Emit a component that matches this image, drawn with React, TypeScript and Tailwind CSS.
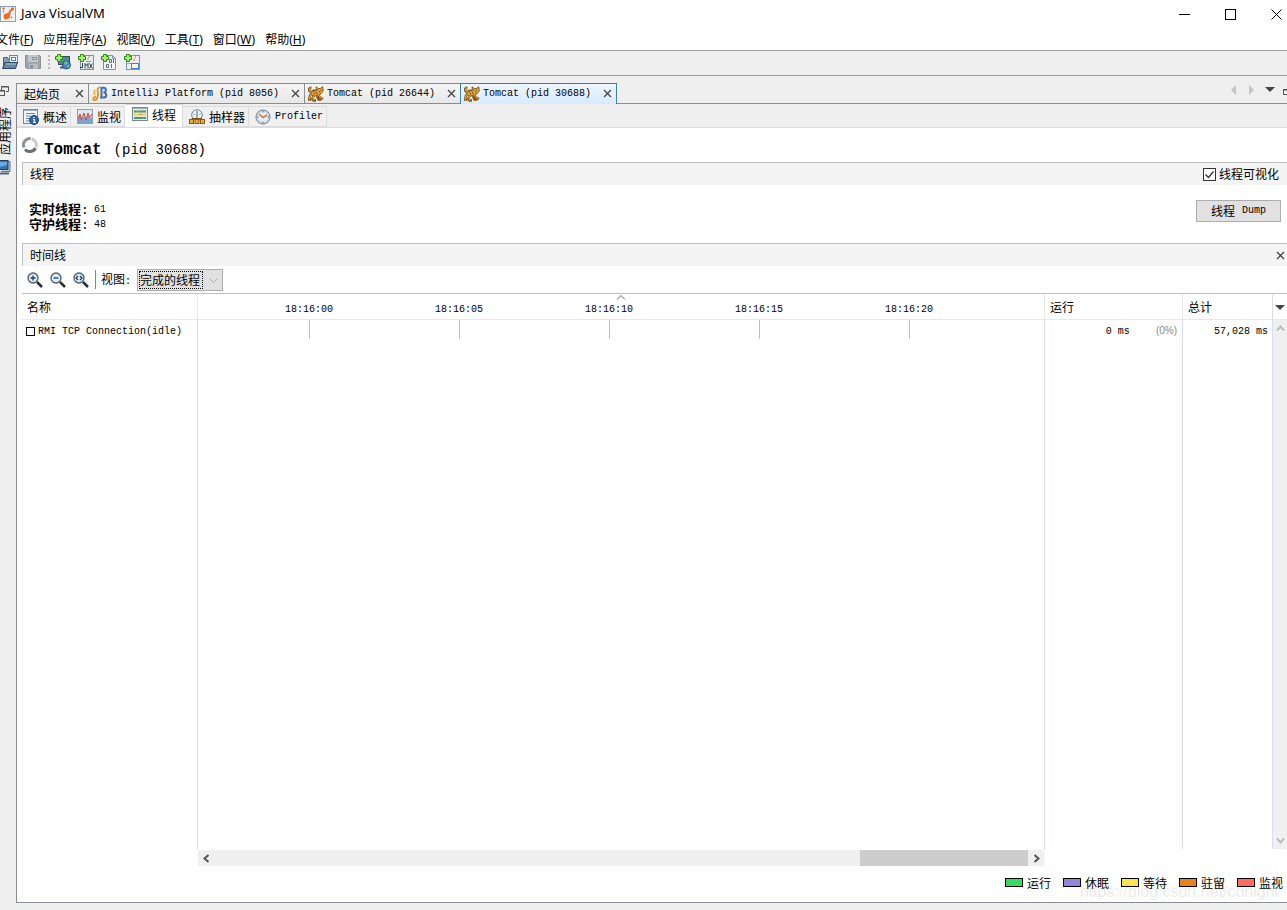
import { useState, type ReactNode } from "react";
import clsx from "clsx";

const MENUS = [
  { label: "文件", hotkey: "F" },
  { label: "应用程序", hotkey: "A" },
  { label: "视图", hotkey: "V" },
  { label: "工具", hotkey: "T" },
  { label: "窗口", hotkey: "W" },
  { label: "帮助", hotkey: "H" },
];

const TICKS = ["18:16:00", "18:16:05", "18:16:10", "18:16:15", "18:16:20"];

const LEGEND = [
  { label: "运行", color: "bg-[#36db62]" },
  { label: "休眠", color: "bg-[#9585db]" },
  { label: "等待", color: "bg-[#ffe253]" },
  { label: "驻留", color: "bg-[#e8821c]" },
  { label: "监视", color: "bg-[#ff6d62]" },
];

const MONO = "font-['Liberation_Mono','Noto_Sans_CJK_SC',monospace]";

interface IconProps {
  children: ReactNode;
  size?: number;
}

function Icon({ children, size = 16 }: IconProps) {
  return (
    <svg
      width={size}
      height={size}
      viewBox={`0 0 ${size} ${size}`}
      fill="none"
      className="shrink-0"
      aria-hidden
    >
      {children}
    </svg>
  );
}

function AppIcon() {
  return (
    <Icon>
      <rect x="0.5" y="0.5" width="15" height="15" fill="#f1f6fa" stroke="#8ba1b4" />
      <path d="M9 1v14M1 8h14" stroke="#d5e0e9" />
      <path
        d="M3.500 10.500C3.500 8.500 5 7 7 7.500l2-1.500L9 4.500 13 2l.5 1L10.500 6l.5 1.500-1 .5.5 1.500C9.800 12.500 7 14 5.500 13.500 4.200 13.200 3.500 12 3.500 10.500Z"
        fill="#f4691e"
      />
      <circle cx="3.500" cy="2.500" r="1.200" fill="#f4691e" />
      <circle cx="12.500" cy="3" r="1.700" fill="#f4691e" />
      <circle cx="3.500" cy="5.500" r=".9" fill="#f4691e" />
      <circle cx="11.500" cy="11.500" r=".9" fill="#f4691e" />
    </Icon>
  );
}

function OpenIcon() {
  return (
    <Icon>
      <path d="M1.500 13V3.500h4l1 2H13V8" fill="#8aa0b6" stroke="#46617d" />
      <rect x="7.500" y="1.500" width="8" height="7" fill="#eaf3fb" stroke="#5f87b0" />
      <rect x="9.500" y="3.500" width="4" height="3" fill="#fff" stroke="#4e83bd" />
      <path d="M.5 14.500 3 8.500h12.500l-2 6Z" fill="#6786a5" stroke="#2d4763" />
      <path d="M4 10h10" stroke="#a9bfd4" />
    </Icon>
  );
}

function SaveIcon() {
  return (
    <Icon>
      <path d="M.5 1.500h14l1 1v12h-14l-1-1Z" fill="#a0a5aa" stroke="#8c9196" />
      <rect x="3" y="1" width="10" height="7" fill="#c3c7cb" />
      <rect x="7.500" y="3.500" width="4" height="2" stroke="#91979d" />
      <rect x="4" y="10" width="9" height="5" fill="#b9bdc1" />
      <rect x="5" y="11" width="3" height="4" fill="#8e9398" />
    </Icon>
  );
}

function PlusMark() {
  return (
    <path
      d="M2.500.5h3v2h2v3h-2v2h-3v-2h-2v-3h2Z"
      fill="#a6ee69"
      stroke="#2c8911"
    />
  );
}

function AddRemoteIcon() {
  return (
    <Icon>
      <rect x="3.500" y="2.500" width="11" height="8" fill="#5684a7" stroke="#354a5e" />
      <path d="M5 13.500h6M8 11v3" stroke="#4c5c6b" strokeWidth="2" />
      <circle cx="11.500" cy="11" r="4" fill="#3d88c8" stroke="#285a83" />
      <path d="M9 9c1-2 3-2 4-1l-1 2-2 1Zm3 3 3-2-1 3-2 1Z" fill="#7fc45a" />
      <PlusMark />
    </Icon>
  );
}

function AddJmxIcon() {
  return (
    <Icon>
      <rect x="2.500" y="1.500" width="13" height="14" fill="#e9eff5" stroke="#8092a5" />
      <path d="M11 2c1 2-2 2-1 4" stroke="#e98131" />
      <path d="M8 7c1 1 4 1 5 0" stroke="#5382b1" />
      <path
        d="M4.500 9v4.500H2M7 14.500V9.500l1.500 2 1.500-2v5M11.500 9.500l3 5M14.500 9.500l-3 5"
        stroke="#333c45"
      />
      <PlusMark />
    </Icon>
  );
}

function AddDumpIcon() {
  return (
    <Icon>
      <path d="M2.500 1.500h9l3 3v11h-12Z" fill="#f3f6f9" stroke="#8092a5" />
      <path d="M11.500 1.500v3h3" stroke="#8092a5" />
      <path d="M8.500 5.500h2v3h-2ZM12.500 5v4M5.500 10.500h2v3h-2ZM10.500 10v4" stroke="#606c77" />
      <PlusMark />
    </Icon>
  );
}

function AddSnapshotIcon() {
  return (
    <Icon>
      <rect x="2.500" y="1.500" width="13" height="14" fill="#eaf0f6" stroke="#7f91a4" />
      <path d="M11 2c2 2-2 2-1 5" stroke="#e98131" />
      <path d="M2.500 9.500h13" stroke="#8eabc7" />
      <rect x="7.500" y="9.500" width="7" height="5" fill="#fff" stroke="#4b82bd" />
      <PlusMark />
    </Icon>
  );
}

function IntelliJIcon() {
  return (
    <Icon>
      <path d="M8 1C3 3 7 6 6 9.500c-.5 2.500-1.500 4.500-3.500 4.500C.5 14 1 10.500 4 11" stroke="#e99212" strokeWidth="1.800" />
      <path d="M3.500 4C1.500 6 1.500 7.500 3.500 8.500" stroke="#f6b73d" strokeWidth="1.800" />
      <path d="M9.500 12V1.800h2c3.200 0 3.200 4.200 0 4.700 3.800.3 3.600 5 0 5H8" stroke="#4370b8" strokeWidth="2" />
    </Icon>
  );
}

function TomcatIcon() {
  return (
    <Icon>
      <path
        d="M3.500 6C0 5.500.5 1.500 3.500 1.800M4 5.500c2-2 3.500 0 5-1M4 7l-2 2.500-1 4h2.500M6 9.500 4.500 12l1 2.500H8M10 8.500l1.500 2.500 3.500 2M9 10l1.500 3.500h3"
        stroke="#8a5810"
        strokeWidth="2.400"
      />
      <path
        d="M3 6.500c2-2.500 4-1 5.500-2L8 .8l2.300 1.700h2L14.800.8l.4 4.200-2.200 2.800L11 9 7 10 4 9.500Z"
        fill="#e3a744"
        stroke="#80510f"
        strokeWidth=".9"
      />
      <path
        d="M3.500 6C.5 5.500 1 1.700 3.500 1.800M3.500 7.500 2 10l-.7 3.500M6 9.500 4.800 12l1 2.300M10.500 9l1.500 2 2.500 1.800"
        stroke="#e8b352"
      />
      <path d="M5.500 6.500 7 8.500M8 6l1.500 2M9.500 4.200h1M12.300 4.200h1M11 6h1.300" stroke="#664008" />
    </Icon>
  );
}

function OverviewIcon() {
  return (
    <Icon>
      <rect x="0.5" y="0.5" width="14" height="14" fill="#eef3f8" stroke="#74899e" />
      <path d="M1 1.500h13" stroke="#9db2c6" />
      <path d="M3 4.500h9M3 7h5M3 9.500h4M3 12h3" stroke="#6e879e" />
      <circle cx="11" cy="11" r="4.500" fill="#2f65ae" stroke="#1d4585" />
      <path d="M11 8v1.300M10 10.500h1.300v3M10 13.500h3" stroke="#fff" strokeWidth="1.200" />
    </Icon>
  );
}

function MonitorIcon() {
  return (
    <Icon>
      <rect x="0.5" y="0.5" width="15" height="14" fill="#dce9f3" stroke="#89a0b4" />
      <path d="M1 14V9l2-3 2 5 2-4 2 4 2-5 2 4 2-2v6Z" fill="#78a6d1" />
      <path d="m1 10 2-5 1.500 6L7 4l2 7 2-7 1.500 5L15 5" stroke="#d3413d" />
    </Icon>
  );
}

function ThreadsIcon() {
  return (
    <Icon>
      <rect x="0.5" y="0.5" width="15" height="13" fill="#dfe8f0" stroke="#72889e" />
      <path d="M1 1.500h14" stroke="#a0b6ca" />
      <path d="M2 4.500h12" stroke="#649546" strokeWidth="2" />
      <path d="M2 7.500h12" stroke="#ecd661" strokeWidth="2" />
      <path d="M2 11h12" stroke="#569756" strokeWidth="2" />
      <path d="M5 4.500h2M10 11h2M7 7.500h3" stroke="#e18a48" />
    </Icon>
  );
}

function SamplerIcon() {
  return (
    <Icon>
      <circle cx="8" cy="6" r="5.300" fill="#edf5fc" stroke="#6d8297" />
      <path d="M8 2v4M4.500 5l1 .5M11.500 5l-1 .5" stroke="#4d6880" />
      <path d="M8 6v6M3 12V9.500h10V12" stroke="#765018" />
      <rect x="0.5" y="10.500" width="4" height="4" fill="#e6ad41" stroke="#88591a" />
      <rect x="6" y="10.500" width="4" height="4" fill="#e6ad41" stroke="#88591a" />
      <rect x="11.500" y="10.500" width="4" height="4" fill="#e6ad41" stroke="#88591a" />
    </Icon>
  );
}

function ProfilerIcon() {
  return (
    <Icon>
      <circle cx="8" cy="8" r="7" fill="#e2eef7" stroke="#637c91" />
      <circle cx="8" cy="8" r="5.500" stroke="#bdd0df" />
      <path d="m4 5 4 3.500L12 6" stroke="#e4752b" strokeWidth="1.500" />
      <path d="M8 2v1.500M8 12.500V14M2 8h1.500M12.500 8H14" stroke="#627d95" />
    </Icon>
  );
}

function SpinnerIcon() {
  return (
    <Icon>
      <path d="M2 10.500A6.500 6.500 0 0 1 8.500 1.500" stroke="#8f8f95" strokeWidth="3" />
      <path d="M9.500 1.700A6.500 6.500 0 0 1 14 10" stroke="#c9c9cd" strokeWidth="3" />
      <path d="M13.500 11A6.500 6.500 0 0 1 3 12.500" stroke="#6c6c74" strokeWidth="3" />
    </Icon>
  );
}

function ZoomIcon({ sign }: { sign: string }) {
  return (
    <Icon>
      <path d="m10 10 5 5" stroke="#2e2e2e" strokeWidth="2.500" />
      <circle cx="6" cy="6" r="5" fill="#d9ebfa" stroke="#545b63" strokeWidth="1.300" />
      <path d={sign} stroke="#1f4268" strokeWidth="1.300" />
    </Icon>
  );
}

function CloseGlyph() {
  return (
    <Icon size={9}>
      <path d="m1 1 7 7M8 1 1 8" stroke="#444" strokeWidth="1.300" />
    </Icon>
  );
}

function RestoreIcon() {
  return (
    <Icon size={12}>
      <path d="M4.500 5V1.500h7v5H9" stroke="#555" />
      <path d="M4 2h8" stroke="#555" />
      <rect x="0.500" y="5.500" width="7" height="5" stroke="#555" />
      <path d="M0 6h8" stroke="#555" />
    </Icon>
  );
}

function ApplicationsIcon() {
  return (
    <Icon>
      <path d="M6 2.500h9v10H6" fill="#c6d3df" stroke="#607182" />
      <rect x="1" y="1.500" width="12" height="9" fill="#3473b5" stroke="#1d3f63" />
      <path d="M2 3h10v3L2 9Z" fill="#6fa9df" />
      <path d="M4 14.500h10" stroke="#52606e" strokeWidth="2" />
    </Icon>
  );
}

interface EditorTabProps {
  icon?: ReactNode;
  active?: boolean;
  children: ReactNode;
}

function EditorTab({ icon, active, children }: EditorTabProps) {
  return (
    <div
      className={clsx(
        "flex h-full items-center border-t border-r pr-1",
        active
          ? "-ml-px border-l border-[#3c7fb1] bg-linear-to-b from-[#edf6ff] to-[#d9eafc] pb-px"
          : "border-b border-[#898c95] bg-linear-to-b from-[#f5f5f5] to-[#e8e8e8]",
        icon ? "pl-[3px]" : "pl-[7px]",
      )}
    >
      <button type="button" className="flex items-center gap-[3px] whitespace-pre">
        {icon}
        {children}
      </button>
      <button
        type="button"
        aria-label="关闭"
        className={icon ? "ml-3" : "ml-[15px]"}
      >
        <CloseGlyph />
      </button>
    </div>
  );
}

interface ViewTabProps {
  icon: ReactNode;
  active?: boolean;
  children: ReactNode;
}

function ViewTab({ icon, active, children }: ViewTabProps) {
  return (
    <button
      type="button"
      className={clsx(
        "flex items-center gap-1 border-t border-r border-[#dcdcdc] text-xs",
        active
          ? "h-[23px] bg-white pr-[6px] pb-[2px] pl-[7px]"
          : "h-[21px] border-b bg-[#f0f0f0] pr-[3px] pl-[6px]",
      )}
    >
      {icon}
      {children}
    </button>
  );
}

function SectionHeader({ title, children }: { title: string; children: ReactNode }) {
  return (
    <div className="flex h-[23px] shrink-0 items-center justify-between border-t border-l border-[#bfbfbf] bg-[#f4f4f4] pl-[7px] text-xs">
      <h2>{title}</h2>
      {children}
    </div>
  );
}

function Stat({ label, value }: { label: string; value: string }) {
  return (
    <div className="flex h-[15px] items-center">
      <dt className="w-[65px] text-[13px] leading-[15px] font-bold">
        {label}
        <span className={clsx(MONO, "font-normal")}>:</span>
      </dt>
      <dd className={clsx(MONO, "text-[10px]")}>{value}</dd>
    </div>
  );
}

function TitleBar() {
  return (
    <header className="flex h-[30px] shrink-0 items-center justify-between overflow-hidden bg-white pb-[2px]">
      <div className="flex items-center gap-[5px] font-['Noto_Sans','Noto_Sans_CJK_SC',sans-serif] text-[13px]">
        <AppIcon />
        <h1>Java VisualVM</h1>
      </div>
      <div className="-mr-3 flex">
        <button type="button" aria-label="最小化" className="flex w-[46px] justify-center">
          <Icon size={11}>
            <path d="M0 5.500h11" stroke="#000" />
          </Icon>
        </button>
        <button type="button" aria-label="最大化" className="flex w-[46px] justify-center">
          <Icon size={11}>
            <rect x="0.500" y="0.500" width="10" height="10" stroke="#000" />
          </Icon>
        </button>
        <button type="button" aria-label="关闭" className="flex w-[46px] justify-center">
          <Icon size={11}>
            <path d="m.5.5 10 10M10.500.5l-10 10" stroke="#000" />
          </Icon>
        </button>
      </div>
    </header>
  );
}

function Toolbar() {
  return (
    <div className="flex h-[26px] shrink-0 items-center gap-[7px] border-t border-b border-[#a0a0a0] bg-[#efefef] pb-[2px] pl-[2px]">
      <button type="button" aria-label="装入"><OpenIcon /></button>
      <button type="button" aria-label="另存为" disabled><SaveIcon /></button>
      <span className="mr-[-2px] h-[14px] border-l-2 border-dotted border-[#b8b8b8]" />
      <button type="button" aria-label="添加远程主机"><AddRemoteIcon /></button>
      <button type="button" aria-label="添加 JMX 连接"><AddJmxIcon /></button>
      <button type="button" aria-label="添加核心 Dump"><AddDumpIcon /></button>
      <button type="button" aria-label="添加快照"><AddSnapshotIcon /></button>
    </div>
  );
}

function SideRail() {
  return (
    <aside className="flex w-4 shrink-0 flex-col items-start overflow-hidden pt-[2px]">
      <button type="button" aria-label="还原" className="-ml-[3px]">
        <RestoreIcon />
      </button>
      <button
        type="button"
        className="mt-[10px] -ml-[2px] flex flex-col items-center gap-1 text-xs leading-[14px]"
      >
        <span className="rotate-180 [text-orientation:sideways] [writing-mode:vertical-rl]">
          应用程序
        </span>
        <span className="-ml-[5px]">
          <ApplicationsIcon />
        </span>
      </button>
    </aside>
  );
}

function EditorTabs() {
  return (
    <div className={clsx(MONO, "flex h-[21px] shrink-0 text-[10px]")}>
      <EditorTab>
        <span className="font-['Noto_Sans_CJK_SC',sans-serif] text-xs">起始页</span>
      </EditorTab>
      <EditorTab icon={<IntelliJIcon />}>IntelliJ Platform (pid 8056)</EditorTab>
      <EditorTab icon={<TomcatIcon />}>Tomcat (pid 26644)</EditorTab>
      <EditorTab icon={<TomcatIcon />} active>Tomcat (pid 30688)</EditorTab>
      <div className="flex flex-1 items-center justify-end gap-2 overflow-hidden border-b border-[#898c95] pb-[6px]">
        <button type="button" aria-label="向左滚动" disabled>
          <Icon size={10}><path d="M7 0v10L2 5Z" fill="#c4c4c4" /></Icon>
        </button>
        <button type="button" aria-label="向右滚动" disabled>
          <Icon size={10}><path d="M2 0v10l5-5Z" fill="#c4c4c4" /></Icon>
        </button>
        <button type="button" aria-label="文档列表">
          <Icon size={10}><path d="M0 2h10L5 7Z" fill="#444" /></Icon>
        </button>
        <button type="button" aria-label="还原窗口" className="-mr-2">
          <RestoreIcon />
        </button>
      </div>
    </div>
  );
}

function ThreadTable() {
  const head = "border-b border-[#e8e8e8] pl-[5px] text-left align-middle text-xs font-normal";
  const line = "border-l border-l-[#d3def5]";

  return (
    <div className="flex min-h-0 flex-1 border-t border-[#bfbfbf]">
      <div className="grid min-w-0 flex-1">
        <table className="h-full w-full table-fixed border-separate border-spacing-0">
          <colgroup>
            <col className="w-[175px]" />
            <col />
            <col className="w-[138px]" />
            <col className="w-[90px]" />
          </colgroup>
          <thead>
            <tr className="h-[26px]">
              <th className={head}>名称</th>
              <th
                className={clsx(
                  MONO,
                  "relative border-b border-l border-[#e8e8e8] p-0 align-middle text-[10px] font-normal",
                )}
              >
                <svg
                  width="9"
                  height="5"
                  viewBox="0 0 9 5"
                  fill="none"
                  className="absolute top-[1px] left-1/2 -translate-x-1/2"
                  aria-hidden
                >
                  <path d="m.5 4.500 4-4 4 4" stroke="#666" />
                </svg>
                <div className="flex overflow-hidden pt-[6px] pl-9">
                  {TICKS.map((tick) => (
                    <span key={tick} className="w-[150px] shrink-0 text-center">{tick}</span>
                  ))}
                </div>
              </th>
              <th className={clsx(head, "border-l")}>运行</th>
              <th className={clsx(head, "border-l")}>总计</th>
            </tr>
          </thead>
          <tbody className={clsx(MONO, "text-[10px]")}>
            <tr className="h-[22px]">
              <td className="p-0 pl-1 whitespace-nowrap">
                <span className="flex items-center gap-[3px]">
                  <span className="size-[9px] border border-black bg-white" />
                  RMI TCP Connection(idle)
                </span>
              </td>
              <td className={clsx(line, "p-0 align-top")}>
                <div className="flex overflow-hidden pl-9">
                  {TICKS.map((tick) => (
                    <span key={tick} className="flex h-[19px] w-[150px] shrink-0 justify-center">
                      <span className="w-px bg-[#bfbfbf]" />
                    </span>
                  ))}
                </div>
              </td>
              <td className={clsx(line, "p-0 pr-[5px] text-right")}>
                0 ms
                <span className="ml-[26px] font-['Liberation_Sans',sans-serif] text-[#888]">(0%)</span>
              </td>
              <td className={clsx(line, "p-0 pr-1 text-right")}>57,028 ms</td>
            </tr>
            <tr>
              <td />
              <td className={line} />
              <td className={line} />
              <td className={line} />
            </tr>
          </tbody>
        </table>
      </div>
      <div className="flex w-[15px] shrink-0 flex-col border-l border-[#d3def5]">
        <button
          type="button"
          aria-label="选择列"
          className="flex h-[26px] items-center justify-center border-b border-[#e8e8e8] pt-[2px]"
        >
          <Icon size={10}><path d="M0 2h10L5 7Z" fill="#444" /></Icon>
        </button>
        <div className="flex flex-1 flex-col items-center justify-between bg-[#f0f0f0] py-1">
          <Icon size={9}><path d="m1 6.500 3.500-4 3.500 4" stroke="#bbb" strokeWidth="2" /></Icon>
          <Icon size={9}><path d="m1 2.500 3.500 4 3.500-4" stroke="#bbb" strokeWidth="2" /></Icon>
        </div>
      </div>
    </div>
  );
}

function TimelineScrollbar() {
  return (
    <div className="mt-px mr-[243px] ml-[176px] flex h-4 shrink-0 items-center bg-[#efefef]">
      <button type="button" aria-label="向左" className="flex w-4 justify-center">
        <Icon size={9}><path d="m6.500 1-4 3.500 4 3.500" stroke="#555" strokeWidth="2" /></Icon>
      </button>
      <div className="flex h-full flex-1 justify-end">
        <div className="w-[168px] bg-[#cdcdcd]" />
      </div>
      <button type="button" aria-label="向右" className="flex w-4 justify-center">
        <Icon size={9}><path d="m2.500 1 4 3.500-4 3.500" stroke="#555" strokeWidth="2" /></Icon>
      </button>
    </div>
  );
}

function Legend() {
  return (
    <footer className="relative flex h-9 shrink-0 items-center justify-end pr-1 pb-[3px] text-xs">
      <ul className="flex gap-3">
        {LEGEND.map(({ label, color }) => (
          <li key={label} className="flex items-center gap-1">
            <span className={clsx("h-[9px] w-[18px] border border-black", color)} />
            {label}
          </li>
        ))}
      </ul>
      <span className="pointer-events-none absolute right-2 bottom-0 font-['Liberation_Sans',sans-serif] text-base leading-5 text-black/10">
        https://blog.csdn.net/cdnight
      </span>
    </footer>
  );
}

export default function App() {
  const [visualize, setVisualize] = useState(true);

  return (
    <div className="flex h-screen flex-col overflow-hidden bg-[#efefef] font-['Noto_Sans_CJK_SC',sans-serif] text-black">
      <TitleBar />
      <nav className="flex h-5 shrink-0 items-center gap-[10px] bg-white font-['Noto_Sans','Noto_Sans_CJK_SC',sans-serif] text-xs">
        {MENUS.map(({ label, hotkey }) => (
          <button key={hotkey} type="button" className="whitespace-nowrap first:-ml-1">
            {label}(<u>{hotkey}</u>)
          </button>
        ))}
      </nav>
      <Toolbar />

      <div className="flex min-h-0 flex-1 pt-[7px] pb-[7px]">
        <SideRail />
        <main className="flex min-w-0 flex-1 flex-col border-b border-l border-[#898c95] bg-white">
          <div className="bg-[#efefef]">
            <EditorTabs />
            <div className="flex h-6 items-end border-b border-[#dcdcdc]">
              <ViewTab icon={<OverviewIcon />}>概述</ViewTab>
              <ViewTab icon={<MonitorIcon />}>监视</ViewTab>
              <ViewTab icon={<ThreadsIcon />} active>线程</ViewTab>
              <ViewTab icon={<SamplerIcon />}>抽样器</ViewTab>
              <ViewTab icon={<ProfilerIcon />}>
                <span className={clsx(MONO, "text-[10px]")}>Profiler</span>
              </ViewTab>
            </div>
          </div>

          <div className="flex min-h-0 flex-1 flex-col pl-[5px]">
            <div className="flex h-[34px] shrink-0 items-center gap-[6px] pt-1">
              <span className="mb-1"><SpinnerIcon /></span>
              <p className={clsx(MONO, "flex items-baseline gap-3 pt-[5px] text-sm")}>
                <strong className="text-base">Tomcat</strong> (pid 30688)
              </p>
            </div>

            <SectionHeader title="线程">
              <label className="flex items-center gap-[3px] pr-2">
                <span className="relative flex">
                  <input
                    type="checkbox"
                    checked={visualize}
                    onChange={(e) => setVisualize(e.target.checked)}
                    className="peer size-[13px] appearance-none border border-[#333] bg-white"
                  />
                  <svg
                    width="13"
                    height="13"
                    viewBox="0 0 13 13"
                    fill="none"
                    className="pointer-events-none absolute inset-0 hidden peer-checked:block"
                    aria-hidden
                  >
                    <path d="m2.500 6.500 3 3 5-6" stroke="#333" strokeWidth="1.300" />
                  </svg>
                </span>
                线程可视化
              </label>
            </SectionHeader>
            <div className="flex h-[58px] shrink-0 items-start justify-between pt-[15px] pr-[6px] pl-[7px]">
              <dl className="pt-[2px]">
                <Stat label="实时线程" value="61" />
                <Stat label="守护线程" value="48" />
              </dl>
              <button
                type="button"
                className="flex h-[22px] items-center gap-[7px] border border-[#adadad] bg-[#e1e1e1] px-[14px] text-xs"
              >
                线程 <span className={clsx(MONO, "text-[10px]")}>Dump</span>
              </button>
            </div>

            <SectionHeader title="时间线">
              <button type="button" aria-label="关闭时间线" className="pr-[2px]">
                <CloseGlyph />
              </button>
            </SectionHeader>
            <div className="flex h-[27px] shrink-0 items-center gap-[7px] pl-[5px] text-xs">
              <button type="button" aria-label="放大"><ZoomIcon sign="M3.500 6h5M6 3.500v5" /></button>
              <button type="button" aria-label="缩小"><ZoomIcon sign="M3.500 6h5" /></button>
              <button type="button" aria-label="适合窗口大小">
                <ZoomIcon sign="M5 4 3 6l2 2M7 4l2 2-2 2" />
              </button>
              <span className="-ml-px h-[19px] w-px bg-[#888]" />
              <label htmlFor="thread-view" className="-ml-[2px] w-[29px] whitespace-nowrap">
                视图<span className={clsx(MONO, "text-[10px]")}>:</span>
              </label>
              <span className="relative flex">
                <select
                  id="thread-view"
                  className="h-[22px] w-[86px] appearance-none border border-[#adadad] bg-[#e1e1e1] pl-[2px]"
                >
                  <option>完成的线程</option>
                </select>
                <span className="pointer-events-none absolute inset-y-[2px] left-[2px] w-[64px] border border-dotted border-black" />
                <span className="pointer-events-none absolute top-[7px] right-[5px]">
                  <Icon size={9}><path d="m.5 2.500 4 4 4-4" stroke="#aaa" /></Icon>
                </span>
              </span>
            </div>

            <ThreadTable />
            <TimelineScrollbar />
            <Legend />
          </div>
        </main>
      </div>
    </div>
  );
}
